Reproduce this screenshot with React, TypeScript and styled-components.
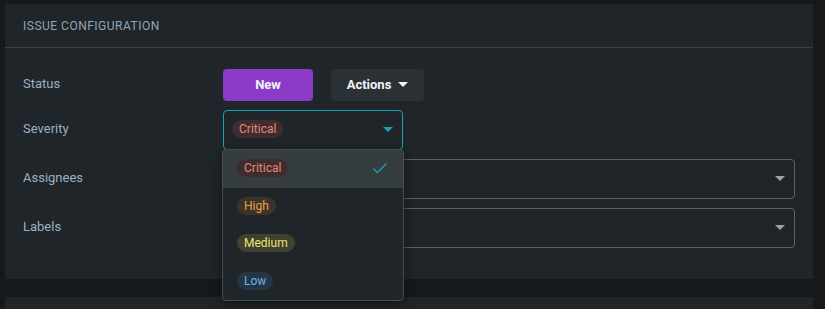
import React, { useState } from 'react';
import styled, { createGlobalStyle } from 'styled-components';

// --- Tipos ---
type Severity = 'Critical' | 'High' | 'Medium' | 'Low';

const severityColors: Record<Severity, { bg: string; fg: string }> = {
  Critical: { bg: '#3e2d2f', fg: '#ec847e' },
  High: { bg: '#3d3327', fg: '#e7a24c' },
  Medium: { bg: '#41412f', fg: '#ebe374' },
  Low: { bg: '#243546', fg: '#72b0e4' },
};

const GlobalStyle = createGlobalStyle`
  html, body {
    margin: 0;
    padding: 0;
    background-color: #15191c;
    font-family: Roboto, 'Noto Sans', sans-serif;
  }
`;

// --- Estilização ---
const Page = styled.div`
  display: flex;
  flex-direction: column;
  gap: 18px;
  padding: 4px 12px 0 5px;
  height: 309px;
  box-sizing: border-box;
  overflow: hidden;
`;

const Panel = styled.section<{ $grow?: boolean }>`
  background-color: #1f2529;
  ${(p) => (p.$grow ? 'flex: 1;' : '')}
`;

const PanelHeader = styled.header`
  height: 43px;
  display: flex;
  align-items: center;
  padding: 0 18px;
  border-bottom: 1px solid #3a4145;
  font-size: 12px;
  letter-spacing: 0.5px;
  color: #8fa6ba;
  text-transform: uppercase;
`;

const PanelBody = styled.div`
  display: flex;
  flex-direction: column;
  gap: 9px;
  padding: 21px 18px 31px;
`;

const Row = styled.div`
  display: flex;
  align-items: center;
`;

const Label = styled.div`
  width: 200px;
  flex-shrink: 0;
  padding-bottom: 4px;
  font-size: 13px;
  color: #9cb1c2;
`;

const ButtonGroup = styled.div`
  display: flex;
  gap: 18px;
`;

const Button = styled.button<{ $variant: 'primary' | 'dark'; $width: number }>`
  width: ${(p) => p.$width}px;
  height: 32px;
  border: none;
  border-radius: 4px;
  display: flex;
  align-items: center;
  justify-content: center;
  gap: 7px;
  padding: 0 0 2px;
  font-family: inherit;
  font-size: 13px;
  font-weight: 700;
  color: #f2f4f6;
  cursor: pointer;
  background-color: ${(p) => (p.$variant === 'primary' ? '#8c3bc8' : '#2a3034')};
`;

const Caret = styled.span<{ $color: string }>`
  width: 0;
  height: 0;
  border-left: 5px solid transparent;
  border-right: 5px solid transparent;
  border-top: 5px solid ${(p) => p.$color};
`;

const SelectWrap = styled.div<{ $width?: number }>`
  position: relative;
  ${(p) => (p.$width ? `width: ${p.$width}px;` : 'flex: 1;')}
`;

const SelectBox = styled.div<{ $focused?: boolean }>`
  height: 40px;
  box-sizing: border-box;
  border: 1px solid ${(p) => (p.$focused ? '#19a3b1' : '#5b6064')};
  border-radius: 4px;
  display: flex;
  align-items: center;
  justify-content: space-between;
  padding: 0 9px 2px 8px;
`;

const Chip = styled.span<{ $level: Severity }>`
  display: inline-flex;
  align-items: center;
  height: 18px;
  padding: 0 7px;
  border-radius: 9px;
  font-size: 12px;
  font-weight: 400;
  background-color: ${(p) => severityColors[p.$level].bg};
  color: ${(p) => severityColors[p.$level].fg};
`;

const Menu = styled.ul`
  position: absolute;
  top: 39px;
  left: -1px;
  width: 182px;
  margin: 0;
  padding: 0;
  list-style: none;
  box-sizing: border-box;
  background-color: #1f2529;
  border: 1px solid #474d51;
  border-radius: 4px;
  box-shadow: 0 4px 12px rgba(0, 0, 0, 0.45);
  overflow: hidden;
  z-index: 10;
`;

const MenuItem = styled.li<{ $active?: boolean }>`
  height: 37.5px;
  box-sizing: border-box;
  display: flex;
  align-items: center;
  justify-content: space-between;
  padding: 0 15px 1px 14px;
  background-color: ${(p) => (p.$active ? '#363d40' : 'transparent')};
`;

const CheckIcon = () => (
  <svg width="16" height="12" viewBox="0 0 16 12" fill="none">
    <path d="M1.5 6.5 L5.5 10.5 L14.5 1.5" stroke="#19a3b1" strokeWidth="1.4" />
  </svg>
);

// --- Componente ---
const levels: Severity[] = ['Critical', 'High', 'Medium', 'Low'];

const App: React.FC = () => {
  const [severity] = useState<Severity>('Critical');

  return (
    <>
      <GlobalStyle />
      <Page>
        <Panel>
          <PanelHeader>Issue Configuration</PanelHeader>
          <PanelBody>
            <Row>
              <Label>Status</Label>
              <ButtonGroup>
                <Button $variant="primary" $width={90}>New</Button>
                <Button $variant="dark" $width={93}>
                  Actions <Caret $color="#f2f4f6" />
                </Button>
              </ButtonGroup>
            </Row>
            <Row>
              <Label>Severity</Label>
              <SelectWrap $width={180}>
                <SelectBox $focused>
                  <Chip $level={severity}>{severity}</Chip>
                  <Caret $color="#19a3b1" />
                </SelectBox>
                <Menu>
                  {levels.map((lvl) => (
                    <MenuItem key={lvl} $active={lvl === severity}>
                      <Chip $level={lvl}>{lvl}</Chip>
                      {lvl === severity && <CheckIcon />}
                    </MenuItem>
                  ))}
                </Menu>
              </SelectWrap>
            </Row>
            <Row>
              <Label>Assignees</Label>
              <SelectWrap>
                <SelectBox>
                  <span />
                  <Caret $color="#9da2a6" />
                </SelectBox>
              </SelectWrap>
            </Row>
            <Row>
              <Label>Labels</Label>
              <SelectWrap>
                <SelectBox>
                  <span />
                  <Caret $color="#9da2a6" />
                </SelectBox>
              </SelectWrap>
            </Row>
          </PanelBody>
        </Panel>
        <Panel $grow />
      </Page>
    </>
  );
};

export default App;
